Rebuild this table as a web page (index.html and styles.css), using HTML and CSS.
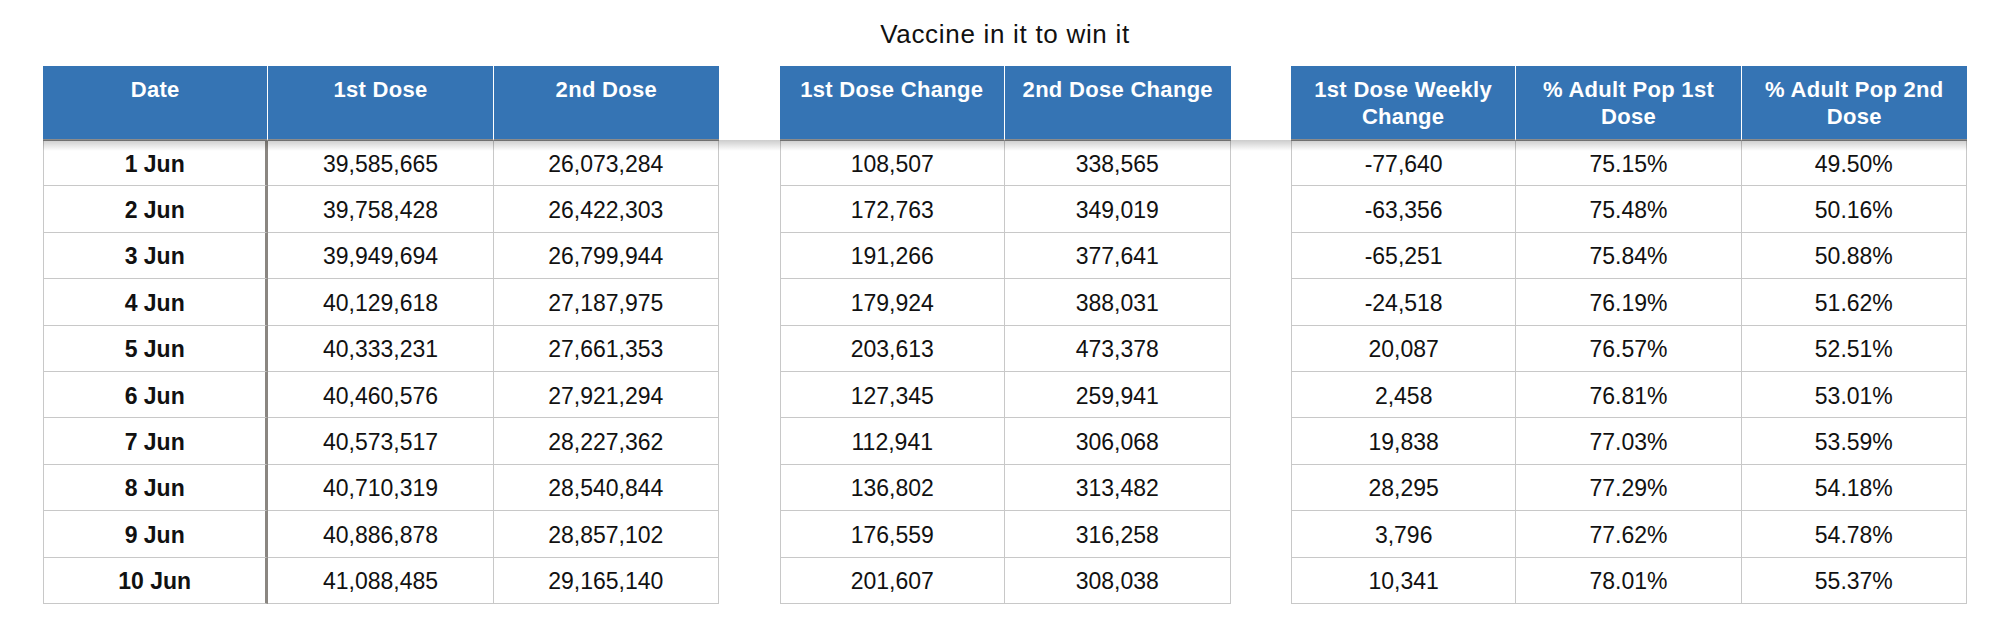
FILE: index.html
```html
<!DOCTYPE html>
<html lang="en">
<head>
<meta charset="utf-8">
<title>Vaccine in it to win it</title>
<link rel="stylesheet" href="styles.css">
</head>
<body>
<div class="page">
  <h1 class="title">Vaccine in it to win it</h1>
  <div class="tables">
    <table class="grid grid-3 first-bold">
      <thead>
        <tr><th>Date</th><th>1st Dose</th><th>2nd Dose</th></tr>
      </thead>
      <tbody>
        <tr><td>1 Jun</td><td>39,585,665</td><td>26,073,284</td></tr>
        <tr><td>2 Jun</td><td>39,758,428</td><td>26,422,303</td></tr>
        <tr><td>3 Jun</td><td>39,949,694</td><td>26,799,944</td></tr>
        <tr><td>4 Jun</td><td>40,129,618</td><td>27,187,975</td></tr>
        <tr><td>5 Jun</td><td>40,333,231</td><td>27,661,353</td></tr>
        <tr><td>6 Jun</td><td>40,460,576</td><td>27,921,294</td></tr>
        <tr><td>7 Jun</td><td>40,573,517</td><td>28,227,362</td></tr>
        <tr><td>8 Jun</td><td>40,710,319</td><td>28,540,844</td></tr>
        <tr><td>9 Jun</td><td>40,886,878</td><td>28,857,102</td></tr>
        <tr><td>10 Jun</td><td>41,088,485</td><td>29,165,140</td></tr>
      </tbody>
    </table>
    <table class="grid grid-2">
      <thead>
        <tr><th>1st Dose Change</th><th>2nd Dose Change</th></tr>
      </thead>
      <tbody>
        <tr><td>108,507</td><td>338,565</td></tr>
        <tr><td>172,763</td><td>349,019</td></tr>
        <tr><td>191,266</td><td>377,641</td></tr>
        <tr><td>179,924</td><td>388,031</td></tr>
        <tr><td>203,613</td><td>473,378</td></tr>
        <tr><td>127,345</td><td>259,941</td></tr>
        <tr><td>112,941</td><td>306,068</td></tr>
        <tr><td>136,802</td><td>313,482</td></tr>
        <tr><td>176,559</td><td>316,258</td></tr>
        <tr><td>201,607</td><td>308,038</td></tr>
      </tbody>
    </table>
    <table class="grid grid-3">
      <thead>
        <tr><th>1st Dose Weekly Change</th><th>% Adult Pop 1st Dose</th><th>% Adult Pop 2nd Dose</th></tr>
      </thead>
      <tbody>
        <tr><td>-77,640</td><td>75.15%</td><td>49.50%</td></tr>
        <tr><td>-63,356</td><td>75.48%</td><td>50.16%</td></tr>
        <tr><td>-65,251</td><td>75.84%</td><td>50.88%</td></tr>
        <tr><td>-24,518</td><td>76.19%</td><td>51.62%</td></tr>
        <tr><td>20,087</td><td>76.57%</td><td>52.51%</td></tr>
        <tr><td>2,458</td><td>76.81%</td><td>53.01%</td></tr>
        <tr><td>19,838</td><td>77.03%</td><td>53.59%</td></tr>
        <tr><td>28,295</td><td>77.29%</td><td>54.18%</td></tr>
        <tr><td>3,796</td><td>77.62%</td><td>54.78%</td></tr>
        <tr><td>10,341</td><td>78.01%</td><td>55.37%</td></tr>
      </tbody>
    </table>
  </div>
</div>
</body>
</html>
```

FILE: styles.css
```css
html, body {
  margin: 0;
  padding: 0;
  background: #ffffff;
}

body {
  font-family: "Liberation Sans", Arial, Helvetica, sans-serif;
  color: #111111;
}

.page {
  width: 1924px;
  margin-left: 43px;
}

.title {
  margin: 18px 0 16px;
  font-size: 26px;
  letter-spacing: 0.7px;
  line-height: 32px;
  font-weight: normal;
  text-align: center;
  color: #111111;
}

.tables {
  position: relative;
  display: flex;
  align-items: flex-start;
  gap: 60.5px;
}

.tables::after {
  content: "";
  position: absolute;
  left: 0;
  right: 0;
  top: 74px;
  height: 11px;
  background: linear-gradient(to bottom, rgba(0, 0, 0, 0.2), rgba(0, 0, 0, 0));
  pointer-events: none;
}

.grid {
  border-collapse: separate;
  border-spacing: 0;
  table-layout: fixed;
}

.grid-3 {
  width: 676px;
}

.grid-2 {
  width: 451px;
}

.grid th {
  box-sizing: border-box;
  height: 75px;
  padding: 10px 10px 0;
  vertical-align: top;
  background: #3574b4;
  color: #ffffff;
  font-size: 22px;
  letter-spacing: 0.3px;
  line-height: 27px;
  font-weight: bold;
  text-align: center;
  border-right: 1px solid #ffffff;
  border-bottom: 2px solid #8b8b8b;
}

.grid th:last-child {
  border-right: 0;
}

.grid td {
  box-sizing: border-box;
  height: 46.4px;
  padding: 3px 6px 0;
  vertical-align: middle;
  text-align: center;
  font-size: 23px;
  color: #111111;
  border-right: 1px solid #c8c8c8;
  border-bottom: 1px solid #c8c8c8;
}

.grid tbody tr:first-child td {
  height: 45.4px;
}

.grid td:first-child {
  border-left: 1px solid #c8c8c8;
}

.first-bold td:first-child {
  font-weight: bold;
  border-right: 3px solid #8a8681;
}
```
